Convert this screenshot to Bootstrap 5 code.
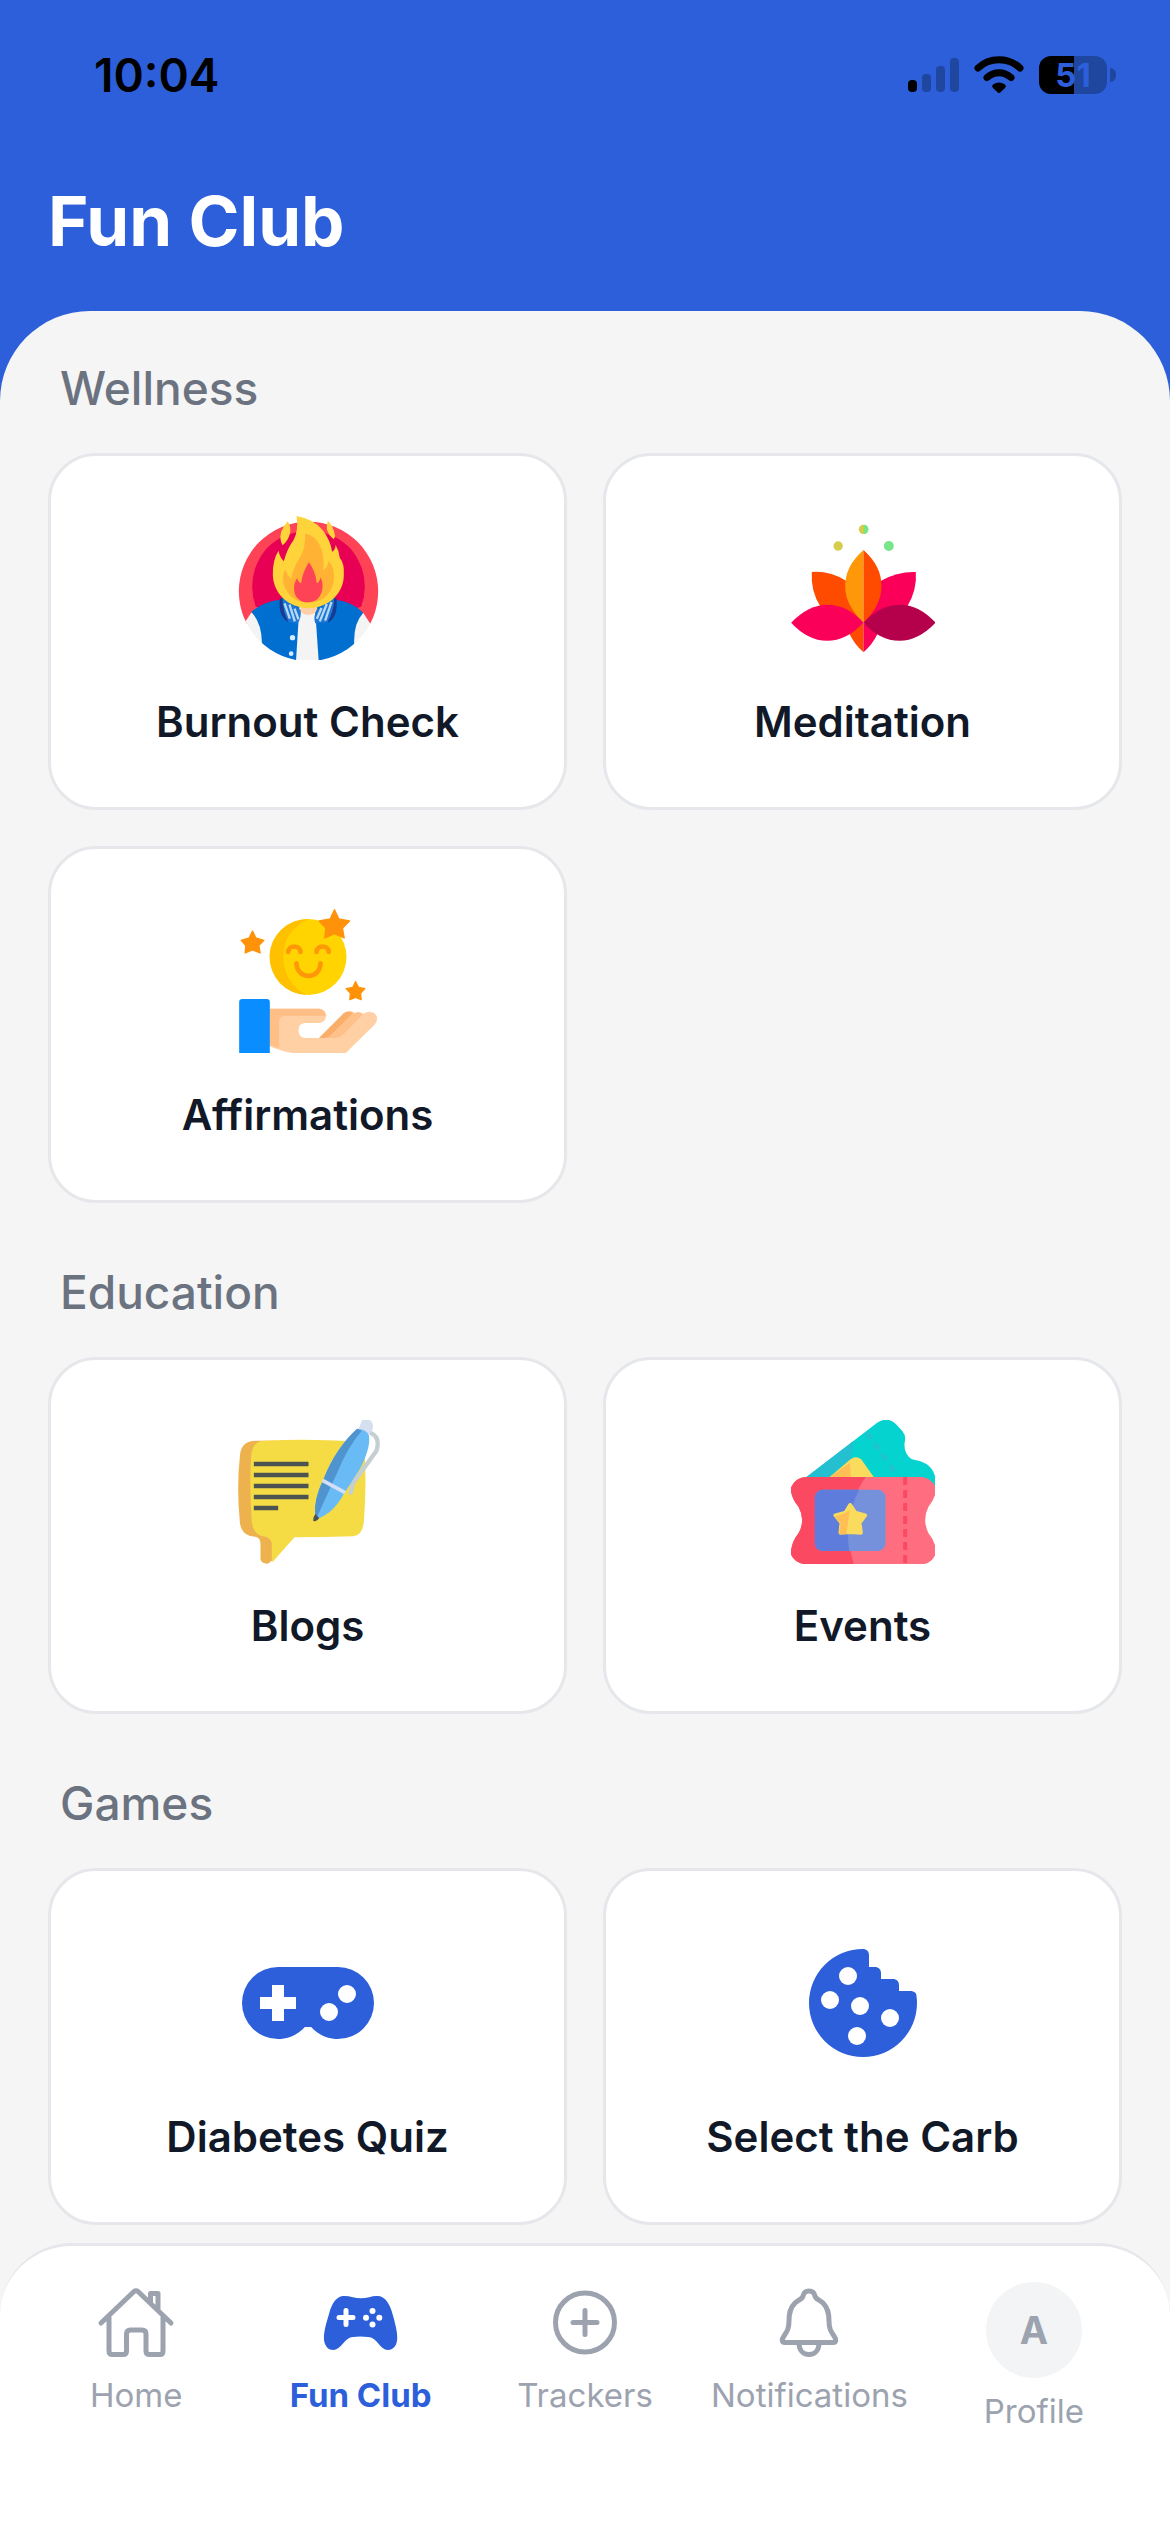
<!DOCTYPE html>
<html lang="en">
<head>
<meta charset="utf-8">
<meta name="viewport" content="width=device-width, initial-scale=1">
<title>Fun Club</title>
<link href="https://cdn.jsdelivr.net/npm/bootstrap@5.3.0/dist/css/bootstrap.min.css" rel="stylesheet">
<style>
  :root { --brand: #2d5fdb; --muted: #9ca3af; --line: #e5e7eb; }
  body { font-family: Inter, "Liberation Sans", sans-serif; background: var(--brand); color: #111827; }
  .status-bar { height: 149px; padding: 0 54px 0 94px; color: #000; }
  .clock { font-size: 46px; line-height: 60px; font-weight: 600; }
  .status-icons { gap: 15px; }
  .battery { width: 68px; height: 38px; border-radius: 12px; font-size: 33px; line-height: 38px; font-weight: 700; color: var(--brand); background: linear-gradient(90deg, #000 35px, #20479f 35px); }
  .battery-tip { width: 6px; height: 14px; border-radius: 0 7px 7px 0; background: #20479f; margin-left: 3px; }
  .page-title { padding: 30px 48px 48px; font-size: 69px; line-height: 84px; font-weight: 700; }
  .sheet { background: #f5f5f5; border-radius: 90px 90px 0 0; padding: 48px 48px 307px; }
  .sheet section + section { margin-top: 60px; }
  .section-title { font-size: 46px; line-height: 58px; font-weight: 500; color: #6b7280; margin: 0 12px 36px; }
  .tile-grid { --bs-gutter-x: 36px; --bs-gutter-y: 36px; }
  .tile { border: 3px solid var(--line); border-radius: 48px; padding: 60px 24px; gap: 36px; font-size: 42px; line-height: 51px; font-weight: 600; color: #111827; background: #fff; }
  .tile svg { width: 144px; height: 144px; }
  .tabs { background: #fff; border-top: 3px solid var(--line); border-radius: 72px 72px 0 0; height: 289px; padding: 36px 24px 0; }
  .tab { flex: 1 1 0; gap: 12px; font-size: 33px; line-height: 42px; color: var(--muted); }
  .tab.active { color: var(--brand); font-weight: 700; }
  .tab svg { width: 80px; height: 80px; }
  .avatar { width: 96px; height: 96px; background: #f3f4f6; font-size: 38px; font-weight: 700; }
</style>
</head>
<body>
<header class="text-white">
  <div class="status-bar d-flex align-items-center justify-content-between">
    <span class="clock">10:04</span>
    <div class="status-icons d-flex align-items-center">
      <svg width="51" height="38" viewBox="0 0 51 38" aria-label="Signal"><rect y="24" width="9" height="12" rx="4"/><g fill="#20479f"><rect x="14" y="18" width="9" height="18" rx="4"/><rect x="28" y="10" width="9" height="26" rx="4"/><rect x="42" y="2" width="9" height="34" rx="4"/></g></svg>
      <svg width="50" height="38" viewBox="0 0 50 38" aria-label="Wi-Fi"><g fill="none" stroke="#000" stroke-width="7" stroke-linecap="round"><path d="M4 12C15.500 1 34.500 1 46 12"/><path d="M13 21.500C20 15 30 15 37 21.500"/></g><path d="M18.500 29C22 25.500 28 25.500 31.500 29Q32.500 30.500 31 32L26 36.700Q25 37.500 24 36.700L19 32Q17.500 30.500 18.500 29Z"/></svg>
      <div class="d-flex align-items-center"><span class="battery text-center">51</span><span class="battery-tip"></span></div>
    </div>
  </div>
  <h1 class="page-title m-0">Fun Club</h1>
</header>

<main class="sheet">
  <section>
    <h2 class="section-title">Wellness</h2>
    <div class="row row-cols-2 tile-grid">
      <div class="col"><a href="#burnout" class="tile d-flex flex-column align-items-center text-decoration-none">
        <svg viewBox="46.500 48 432 432" aria-hidden="true">
          <defs><clipPath id="disc"><circle cx="264" cy="274" r="209"/></clipPath></defs>
          <g clip-path="url(#disc)">
            <path fill="#ff4357" d="M46 48H480V372H46Z"/>
            <path fill="#e80054" d="M106 320Q85 262 104 205C130 130 190 96 264 92C338 96 398 130 424 205Q443 262 422 320L340 345H190Z"/>
            <path fill="#f4f4f5" d="M76 362L94 336L130 380V440H76ZM450 372L428 338L396 380V440H460Z"/>
            <path fill="#006fd0" d="M92 336Q130 303 182 299H344Q396 305 428 338Q399 370 401 430V490H124V424Q122 365 92 336Z"/>
            <path fill="#f4f4f5" d="M236 330H284L295 490H226Z"/>
          </g>
          <path fill="#ffd0a8" d="M236 318H290V334Q264 356 236 334Z"/>
          <path fill="#173b92" d="M178 296L190 292L204 366Q172 350 178 296ZM348 296L336 292L322 368Q354 350 348 296Z"/>
          <path fill="#1c78d4" d="M186 294L240 330Q244 350 232 370L204 366Q186 334 186 294ZM341 294L288 330Q278 350 284 370L320 367Q341 334 341 294Z"/>
          <path stroke="#b8d8f4" stroke-width="7" fill="none" d="M192 310L208 356M207 314L223 364M222 326L234 358M333 306L314 362M319 312L298 364M303 324L289 356"/>
          <circle cx="216" cy="413" r="8" fill="#d7eaff"/><circle cx="212" cy="461" r="7" fill="#d7eaff"/>
          <path fill="#ffd43b" d="M228 48Q283 58 308 92Q330 122 335 155Q346 148 345 134Q356 152 358 174Q372 190 370 224C370 282 322 324 264 324C204 324 158 280 157 224Q156 180 174 152Q178 172 190 184Q200 146 219 121Q235 90 228 48ZM202 64Q213 82 208 102Q202 124 186 136Q176 118 182 96Q188 78 202 64ZM322 62Q338 76 344 108L340 118Q324 106 319 88Q318 74 322 62Z"/>
          <path fill="#ffb233" d="M254 101Q290 106 304 152Q312 182 308 210Q322 204 324 182Q344 204 340 240C334 282 304 308 264 308C222 308 194 282 188 242Q186 222 194 208Q200 226 212 238Q218 204 236 176Q256 146 254 101Z"/>
          <path fill="#ff4357" d="M265 187Q284 210 289 250Q298 246 300 232Q310 252 304 274C298 296 284 307 263 307C240 307 224 294 221 272Q218 252 230 234Q232 246 242 250Q244 222 265 187Z"/>
        </svg>
        <span>Burnout Check</span></a></div>
      <div class="col"><a href="#meditation" class="tile d-flex flex-column align-items-center text-decoration-none">
        <svg viewBox="61.500 48 432 432" aria-hidden="true">
          <path fill="#ff4b00" d="M124 216Q178 212 226 242L279 368L150 320Q120 274 124 216Z"/>
          <path fill="#fa0058" d="M436 216Q382 214 332 242L279 368L410 320Q440 270 436 216Z"/>
          <path fill="#ff4b00" d="M279 368L236 400Q252 434 279 457Z"/><path fill="#fa0058" d="M279 368L322 400Q306 434 279 457Z"/>
          <path fill="#ff9809" d="M279 150Q224 198 224 258Q224 316 279 368Z"/><path fill="#ff4b00" d="M279 150Q333 198 333 258Q333 316 279 368Z"/>
          <path fill="#fa0058" d="M62 368Q114 314 170 314Q230 314 279 368Q228 422 170 422Q112 422 62 368Z"/>
          <path fill="#b5004c" d="M279 368Q330 314 387 314Q446 314 495 368Q444 422 387 422Q328 422 279 368Z"/>
          <circle cx="279" cy="88" r="14" fill="#d4cc4a"/><path d="M280 74A14 14 0 0 1 280 102Z" fill="#78e588"/>
          <circle cx="203" cy="138" r="14" fill="#d4cc4a"/><circle cx="355" cy="138" r="15" fill="#78e588"/>
        </svg>
        <span>Meditation</span></a></div>
      <div class="col"><a href="#affirmations" class="tile d-flex flex-column align-items-center text-decoration-none">
        <svg viewBox="46.500 57 432 432" aria-hidden="true">
          <circle cx="264" cy="201" r="114" fill="#ffd400"/>
          <path fill="#ffc000" d="M264 87A114 114 0 0 0 258 315Q188 276 188 198Q190 122 264 87Z"/>
          <g fill="none" stroke="#ff9809" stroke-width="14" stroke-linecap="round"><path d="M203 186C205 164 238 164 240 186M288 186C290 164 323 164 325 186"/><path d="M228 220C230 270 298 270 300 220"/></g>
          <g fill="#ff9209" stroke="#ff9209" stroke-width="4" stroke-linejoin="round">
            <path d="M342 59L355 87L387 93L366 114L371 144L342 131L313 144L316 114L296 93L329 87Z"/>
            <path d="M96 123L106 144L130 151L115 167L119 189L96 180L74 189L76 167L62 151L86 144Z"/>
            <path d="M405 275L414 292L433 296L420 310L422 329L405 322L388 329L390 310L377 296L397 292Z"/></g>
          <path fill="#ffd0a3" d="M146 356H296Q317 358 317 378Q315 398 294 399H254Q234 400 234 420Q234 444 256 444H296L370 370Q388 358 402 370Q416 362 428 372Q446 360 462 370Q478 386 462 404L376 489H216Q176 482 146 468Z"/>
          <path fill="#ffbf86" d="M146 356H296Q312 358 316 378H190Q176 380 176 396V474L146 464Z"/>
          <path fill="#ffc18a" d="M296 444L370 370Q388 358 402 370Q416 362 428 372L366 436Q358 444 344 444Z"/>
          <path fill="#f9ae69" d="M296 444L370 370Q382 360 396 370L330 436Q322 444 310 444Z"/>
          <rect x="56" y="327" width="92" height="172" rx="9" fill="#0a8dff"/>
        </svg>
        <span>Affirmations</span></a></div>
    </div>
  </section>

  <section>
    <h2 class="section-title">Education</h2>
    <div class="row row-cols-2 tile-grid">
      <div class="col"><a href="#blogs" class="tile d-flex flex-column align-items-center text-decoration-none">
        <svg viewBox="46.500 60 432 432" aria-hidden="true">
          <path fill="#edb24e" d="M106 122Q60 122 58 170Q48 264 58 366Q62 408 104 410Q120 412 120 432V478Q124 492 142 491L170 470V122Z"/>
          <path fill="#f5dc45" d="M130 122Q264 116 400 124Q432 126 433 176Q438 264 430 366Q426 406 398 409Q310 412 222 412L158 484Q153 489 154 476V432Q152 412 128 409Q98 404 94 366Q86 264 92 166Q96 124 130 122Z"/>
          <path stroke="#4c5350" stroke-width="13" d="M100 192H264M100 225H264M100 258H264M100 291H264M100 324H173"/>
          <path fill="none" stroke="#c5cfd2" stroke-width="13" stroke-linecap="round" stroke-linejoin="round" d="M452 100Q480 112 468 152L396 252L391 278"/>
          <path fill="#d4dff0" d="M426 58H444Q462 68 456 88L446 104L414 86Z"/>
          <path fill="#69bbf6" d="M410 86Q438 88 445 106Q452 140 420 204L370 282Q336 344 286 357Q276 304 309 238Q344 146 410 86Z"/>
          <path fill="#5094cf" d="M410 86L424 92Q382 140 352 214L292 346L284 352Q278 300 309 238Q344 146 410 86Z"/>
          <path stroke="#d4dff7" stroke-width="11" d="M306 241L374 278"/><path fill="#4c5350" d="M285 342L296 354Q288 368 278 362Q276 352 285 342Z"/>
        </svg>
        <span>Blogs</span></a></div>
      <div class="col"><a href="#events" class="tile d-flex flex-column align-items-center text-decoration-none">
        <svg viewBox="61.500 60 432 432" aria-hidden="true">
          <path fill="#05d3d0" d="M104 234L320 68Q352 48 376 72L396 94Q408 108 402 130Q400 162 424 178Q450 182 468 192Q498 212 498 262L460 250Z"/>
          <path fill="#24bfd0" d="M104 234L250 122Q240 170 234 234Z"/>
          <path stroke="#24bfd0" stroke-width="11" stroke-dasharray="22 18" d="M288 98L372 214"/>
          <path fill="#f9dc5e" d="M174 234L240 178Q256 166 272 178L312 234Z"/><path fill="#ffbf55" d="M174 234L238 188L242 234Z"/>
          <path fill="#ff6e80" d="M104 231H455Q486 234 498 270Q492 298 474 320Q454 358 474 400Q494 424 498 456Q486 490 455 493H104Q70 488 60 460Q64 424 84 400Q106 360 84 320Q64 298 60 266Q72 234 104 231Z"/>
          <path fill="#fb4962" d="M104 231H286Q206 340 250 493H104Q70 488 60 460Q64 424 84 400Q106 360 84 320Q64 298 60 266Q72 234 104 231Z"/>
          <path stroke="#fb4962" stroke-width="12" stroke-dasharray="24 15" d="M404 231V492"/>
          <rect x="133" y="269" width="212" height="184" rx="24" fill="#7591dc"/>
          <path fill="#5e7cdb" d="M157 269H266Q222 350 236 453H157Q133 450 133 429V293Q136 271 157 269Z"/>
          <path fill="#f9dc5e" stroke="#f9dc5e" stroke-width="12" stroke-linejoin="round" d="M239 315L254 338L284 346L267 368L271 398L239 396L210 398L213 368L195 346L225 338Z"/>
          <path fill="#ffbf55" d="M226 338L238 330L228 402H206L210 370L192 350Z"/>
        </svg>
        <span>Events</span></a></div>
    </div>
  </section>

  <section>
    <h2 class="section-title">Games</h2>
    <div class="row row-cols-2 tile-grid">
      <div class="col"><a href="#quiz" class="tile d-flex flex-column align-items-center text-decoration-none">
        <svg viewBox="0 0 24 24" fill="#2d5fdb" aria-hidden="true"><path d="M7,6H17A6,6 0 0,1 23,12A6,6 0 0,1 17,18C15.220,18 13.630,17.230 12.530,16H11.470C10.370,17.230 8.780,18 7,18A6,6 0 0,1 1,12A6,6 0 0,1 7,6M6,9V11H4V13H6V15H8V13H10V11H8V9H6M15.500,12A1.500,1.500 0 0,0 14,13.500A1.500,1.500 0 0,0 15.500,15A1.500,1.500 0 0,0 17,13.500A1.500,1.500 0 0,0 15.500,12M18.500,9A1.500,1.500 0 0,0 17,10.500A1.500,1.500 0 0,0 18.500,12A1.500,1.500 0 0,0 20,10.500A1.500,1.500 0 0,0 18.500,9Z"/></svg>
        <span>Diabetes Quiz</span></a></div>
      <div class="col"><a href="#carb" class="tile d-flex flex-column align-items-center text-decoration-none">
        <svg viewBox="0 0 24 24" aria-hidden="true"><path fill="#2d5fdb" d="M12,3A9,9 0 0,0 3,12A9,9 0 0,0 12,21A9,9 0 0,0 21,12C21,11.500 20.960,11 20.870,10.500C20.600,10 20,10 20,10H18V9C18,8 17,8 17,8H15V7C15,6 14,6 14,6H13V4C13,3 12,3 12,3Z"/><g fill="#fff"><circle cx="9.500" cy="7.500" r="1.500"/><circle cx="6.500" cy="11.500" r="1.500"/><circle cx="11.500" cy="12.500" r="1.500"/><circle cx="16.500" cy="14.500" r="1.500"/><circle cx="11" cy="17.500" r="1.500"/></g></svg>
        <span>Select the Carb</span></a></div>
    </div>
  </section>
</main>

<nav class="tabs fixed-bottom d-flex align-items-start" aria-label="Main">
  <a href="#home" class="tab d-flex flex-column align-items-center text-decoration-none">
    <svg viewBox="0 0 80 80" fill="none" stroke="currentColor" stroke-width="5" stroke-linecap="round" stroke-linejoin="round" aria-hidden="true"><path d="M5 41L38 9.500Q40 8 42 9.500L75 41M13 35V69Q13 72.500 16.500 72.500H27Q30.500 72.500 30.500 69V52Q30.500 48 34.500 48H46Q50 48 50 52V69Q50 72.500 53.500 72.500H64Q67 72.500 67 69V35M54.500 21V11.500H62V28"/></svg>
    <span>Home</span></a>
  <a href="#fun" class="tab active d-flex flex-column align-items-center text-decoration-none" aria-current="page">
    <svg viewBox="0 0 80 80" aria-hidden="true"><path fill="currentColor" d="M22 14C28 13.500 34 16.300 40 16.300C46 16.300 52 13.500 56.500 14C64 14 69 22 71.500 32C75 44 77 53 76 59C75 65 71 68 67 68C59 68 56 55 47 55Q39 54 32 55C24 55 20 68 12 68C8 68 4 65 3 58C2.500 50 5 42 8 32C11 21 15 15 22 14Z"/><path stroke="#fff" stroke-width="5" stroke-linecap="round" d="M18 35.500H32M25 28.500V42.500"/><g fill="#fff"><circle cx="51.500" cy="29" r="3"/><circle cx="51.500" cy="42.500" r="3"/><circle cx="45" cy="35.700" r="3"/><circle cx="58.300" cy="35.700" r="3"/></g></svg>
    <span>Fun Club</span></a>
  <a href="#trackers" class="tab d-flex flex-column align-items-center text-decoration-none">
    <svg viewBox="0 0 80 80" fill="none" stroke="currentColor" stroke-width="5" stroke-linecap="round" aria-hidden="true"><circle cx="40" cy="40.500" r="29.500"/><path d="M28 40.500H52M40 28.500V52.500"/></svg>
    <span>Trackers</span></a>
  <a href="#notifications" class="tab d-flex flex-column align-items-center text-decoration-none">
    <svg viewBox="0 0 80 80" fill="none" stroke="currentColor" stroke-width="5" stroke-linejoin="round" aria-hidden="true"><path d="M40 9C36 9 34.500 11.500 34 14C33.500 17 29 18 26 21C21 26 20 31 20 39C20 46 18.500 49 15 54C12.500 57.500 12.500 60.500 16 60.500H64C67.500 60.500 67.500 57.500 65 54C61.500 49 60 46 60 39C60 31 59 26 54 21C51 18 46.500 17 46 14C45.500 11.500 44 9 40 9ZM30 61C30 68 34 72.500 40 72.500C46 72.500 50 68 50 61"/></svg>
    <span>Notifications</span></a>
  <a href="#profile" class="tab d-flex flex-column align-items-center text-decoration-none">
    <span class="avatar rounded-circle d-flex align-items-center justify-content-center">A</span>
    <span>Profile</span></a>
</nav>
<script src="https://cdn.jsdelivr.net/npm/bootstrap@5.3.0/dist/js/bootstrap.bundle.min.js"></script>
</body>
</html>
